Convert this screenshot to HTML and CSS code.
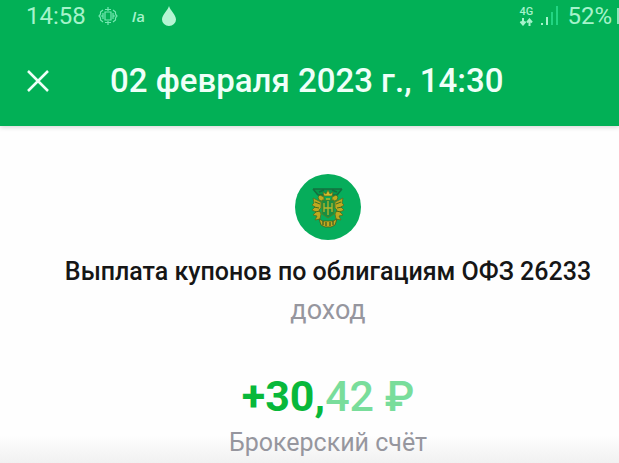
FILE: index.html
```html
<!DOCTYPE html>
<html lang="ru">
<head>
<meta charset="utf-8">
<meta name="viewport" content="width=device-width, initial-scale=1">
<title>Выплата купонов</title>
<link rel="stylesheet" href="styles.css">
</head>
<body>
<header class="header">
  <div class="status">
    <time class="clock">14:58</time>
    <svg class="gear" viewBox="0 0 20 20" aria-hidden="true">
      <path d="M10 1v4M10 15v4M7 3.500h6M7 16.500h6M7 6h6v8H7zM5 4L2.500 6v2L1 10l1.500 2v2L5 16M15 4l2.500 2v2L19 10l-1.500 2v2L15 16M5 7v6M15 7v6M2.500 10H5M15 10h2.500"/>
    </svg>
    <span class="carrier"><i>I</i>a</span>
    <svg class="drop" viewBox="0 0 14 20" aria-hidden="true">
      <path d="M7 0C6 4 0 9 0 13.500a7 6.500 0 0 0 14 0C14 9 8 4 7 0z"/>
    </svg>
    <div class="network">
      <span>4G</span>
      <svg viewBox="0 0 14 8" aria-hidden="true">
        <path d="M4 0v6M1.500 3.500L4 6.500l2.500-3M10.500 8V2M8 4.500l2.500-3 2.500 3"/>
      </svg>
    </div>
    <svg class="signal" viewBox="0 0 18 20" aria-hidden="true">
      <path d="M0 17h2v2H0zM5 11h2v8H5z"/>
      <path class="weak" d="M10 6h2v13h-2zM15 0h2v19h-2z"/>
    </svg>
    <span class="percent">52%</span>
    <span class="battery"></span>
  </div>
  <div class="toolbar">
    <button class="close" type="button" aria-label="Закрыть">
      <svg viewBox="0 0 22 22" aria-hidden="true"><path d="M1 1l20 20M21 1L1 21"/></svg>
    </button>
    <h1 class="title">02 февраля 2023 г., 14:30</h1>
  </div>
</header>
<main class="content">
  <svg class="emblem" viewBox="0 0 66 66" aria-hidden="true">
    <circle cx="33" cy="33" r="33" fill="#06ad5b"/>
    <path d="M18 15h29l-4 6H22z" fill="#079a4c"/>
    <path d="M18 15h29M18 15l5 6h6M47 15l-5 6h-6M24 18l5-2M42 18l-5-2" fill="none" stroke="#14703f" stroke-width="1.500"/>
    <path d="M25 21l4 2v5l-5-2-1-3zM41 21l-4 2v5l5-2 1-3z" fill="#c2ab20" stroke="#47701d" stroke-width=".8"/>
    <path d="M18 24l8 4v6l-2 2 2 4-1 5-5 1 2-4-4-1 3-3-4-2 3-3-3-2 2-2zM48 24l-8 4v6l2 2-2 4 1 5 5 1-2-4 4-1-3-3 4-2-3-3 3-2-2-2z" fill="#bea920" stroke="#567020" stroke-width=".8"/>
    <path d="M20 28l5 2M19 33l5 1M20 38l5-1M46 28l-5 2M47 33l-5 1M46 38l-5-1" stroke="#3f6d22" stroke-width="1"/>
    <path d="M29 22l-1-4 3 2 2-4 2 4 3-2-1 4z" fill="#d6bd2a" stroke="#596a20" stroke-width=".7"/>
    <path d="M27 26h12v14l-6 4-6-4z" fill="#178e42" stroke="#5b7d20" stroke-width=".8"/>
    <path d="M29 29v9M33 27v14M37 29v9M29 34h8M31 25h4" fill="none" stroke="#b7b52c" stroke-width="1.300"/>
    <path d="M24 45l4 2h10l4-2-2 6-4 2h-6l-4-2z" fill="#c2a920" stroke="#47601d" stroke-width=".8"/>
    <path d="M28 47v4M31 48v4M35 48v4M38 47v4" stroke="#315c26" stroke-width="1.200"/>
  </svg>
  <h2 class="name">Выплата купонов по облигациям ОФЗ 26233</h2>
  <p class="kind">доход</p>
  <p class="amount">+30,<span class="cents">42 ₽</span></p>
  <p class="account">Брокерский счёт</p>
</main>
</body>
</html>
```
FILE: styles.css
```css
* {
  box-sizing: border-box;
}

body {
  margin: 0;
  min-height: 100vh;
  display: flex;
  flex-direction: column;
  overflow: hidden;
  background: #fefefe;
  font-family: Roboto, "Liberation Sans", sans-serif;
}

h1, h2, p {
  margin: 0;
  white-space: nowrap;
}

svg {
  flex: none;
}

.header {
  background: #02b056;
  color: #effff8;
  box-shadow: 0 1px 5px rgb(0 0 0 / 18%);
}

.status {
  display: flex;
  align-items: center;
  height: 32px;
  padding-left: 26px;
  color: #a5f3cb;
}

.clock,
.percent {
  font-size: 24px;
  line-height: 32px;
}

.gear {
  width: 20px;
  height: 20px;
  margin-left: 12px;
  fill: none;
  stroke: #76e8b2;
  stroke-width: 1.2;
}

.carrier {
  margin-left: 14px;
  font: 600 15px/20px "Open Sans", sans-serif;
}

.drop {
  width: 14px;
  height: 20px;
  margin-left: 17px;
  fill: #b5f5d3;
}

.network {
  display: flex;
  flex-direction: column;
  align-items: center;
  margin-left: auto;
  font-size: 11px;
  font-weight: 500;
  line-height: 12px;
}

.network svg {
  width: 14px;
  height: 8px;
  fill: none;
  stroke: #a5f3cb;
  stroke-width: 2;
}

.signal {
  width: 18px;
  height: 20px;
  margin: 0 8px;
  fill: #a5f3cb;
}

.weak {
  fill: #22d583;
}

.battery {
  width: 2px;
  height: 16px;
  margin-left: 5px;
  background: #8beabb;
}

.toolbar {
  display: flex;
  align-items: center;
  height: 94px;
  padding: 4px 27px 0;
}

.close {
  display: flex;
  margin: 0;
  padding: 0;
  border: 0;
  background: none;
}

.close svg {
  width: 22px;
  height: 22px;
  fill: none;
  stroke: #effff8;
  stroke-width: 2.5;
}

.title {
  margin-left: 61px;
  font-size: 33px;
  font-weight: 500;
  line-height: 40px;
}

.content {
  flex: 1;
  display: flex;
  flex-direction: column;
  align-items: center;
  padding: 48px 0 0 37px;
  background: linear-gradient(to top, #f1f1f1, transparent 28px);
}

.emblem {
  width: 66px;
  height: 66px;
}

.name {
  margin-top: 14px;
  color: #161616;
  font-size: 25px;
  font-weight: 500;
  line-height: 36px;
}

.kind,
.account {
  color: #96969e;
  line-height: 36px;
}

.kind {
  margin-top: 2px;
  font-size: 27px;
}

.account {
  margin-top: 3px;
  font-size: 25px;
}

.amount {
  margin-top: 42px;
  color: #08b83b;
  font-size: 43px;
  font-weight: 700;
  line-height: 52px;
}

.cents {
  color: #79dd9b;
  font-weight: 500;
}
```
